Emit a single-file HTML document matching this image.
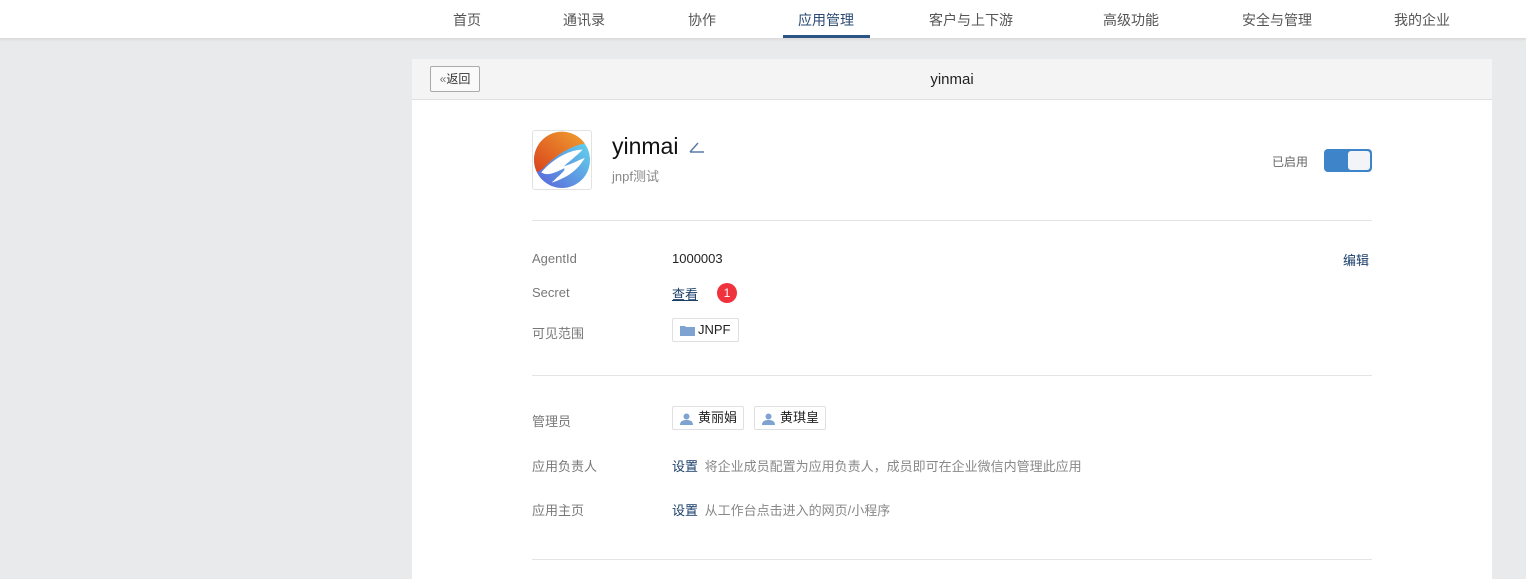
<!DOCTYPE html><html><head><meta charset="utf-8"><style>
body{margin:0;width:1526px;height:570px;background:#e9eaeb;font-family:"Liberation Sans","Noto Sans CJK SC",sans-serif;overflow:hidden;position:relative;font-size:13px}
.nav{position:absolute;left:0;top:0;width:1526px;height:38px;background:#fff;border-bottom:1px solid #dcdcdc;box-shadow:0 1px 2px rgba(0,0,0,.06)}
.nav span{position:absolute;top:10px;font-size:14px;color:#555;transform:translateX(-50%)}
.nav .act{color:#2a4a72}
.ul{position:absolute;left:783px;top:35px;width:87px;height:3px;background:#2c5587}
.card{position:absolute;left:412px;top:59px;width:1080px;height:520px;background:#fff}
.hd{height:40px;background:#f4f4f4;border-bottom:1px solid #e0e0e0;position:relative}
.back{position:absolute;left:18px;top:7px;width:50px;height:26px;border:1px solid #aaa;border-radius:2px;font-size:12px;color:#333;line-height:24px;text-align:center;box-sizing:border-box;background:#fafafa}
.t{position:absolute;left:0;right:0;top:11px;text-align:center;font-size:15px;color:#222}
.a{position:absolute}
.lbl{color:#787878;font-size:13px}
.hr{position:absolute;left:120px;width:840px;height:1px;background:#e4e4e4}
.tag{position:absolute;height:24px;border:1px solid #e0e0e0;border-radius:2px;box-sizing:border-box;font-size:13px;color:#222;line-height:22px;padding-left:25px}
.lnk{color:#1a3f6a}
.gray{color:#888}
</style></head><body>
<div class="nav">
<span style="left:467px">首页</span><span style="left:584px">通讯录</span><span style="left:702px">协作</span><span style="left:826px" class="act">应用管理</span><span style="left:971px">客户与上下游</span><span style="left:1131px">高级功能</span><span style="left:1277px">安全与管理</span><span style="left:1422px">我的企业</span>
<div class="ul"></div></div>
<div class="card">
<div class="hd"><div class="back"><span style="color:#777">«</span>返回</div><div class="t" style="top:12px">yinmai</div></div>
<div class="a" style="left:120px;top:71px;width:60px;height:60px;border:1px solid #e2e2e2;border-radius:3px;box-sizing:border-box;overflow:hidden">
<svg width="58" height="58" viewBox="0 0 56 56"><defs><linearGradient id="o" x1="0" y1="1" x2="1" y2="0"><stop offset="0" stop-color="#d9421c"/><stop offset="1" stop-color="#f0a030"/></linearGradient><linearGradient id="b" x1="0" y1="1" x2="1" y2="0"><stop offset="0" stop-color="#5a5fd8"/><stop offset="1" stop-color="#62e0ee"/></linearGradient></defs>
<circle cx="28" cy="28" r="27" fill="url(#b)"/><path d="M1 28A27 27 0 0 1 50 12C40 14 25 20 10 36L4 40A27 27 0 0 1 1 28Z" fill="url(#o)"/><path d="M8 40C20 26 36 18 48 18C40 26 34 30 30 34C38 32 44 28 50 26C42 40 30 46 18 50C26 42 32 38 30 36C22 40 14 44 8 40Z" fill="#fff"/></svg></div>
<div class="a" style="left:200px;top:74px;font-size:23px;color:#111">yinmai</div>
<svg class="a" style="left:277px;top:82px" width="16" height="12"><path d="M1 11L9 2M1 11H15" stroke="#5a7ca8" stroke-width="1.5" fill="none"/></svg>
<div class="a gray" style="left:200px;top:107px;font-size:13px">jnpf测试</div>
<div class="a gray" style="left:860px;top:94px;font-size:12px;color:#666">已启用</div>
<div class="a" style="left:912px;top:90px;width:48px;height:23px;background:#3d84c8;border-radius:4px"><div style="position:absolute;right:2px;top:2px;width:22px;height:19px;background:#f2f4f8;border-radius:3px"></div></div>
<div class="hr" style="top:161px"></div>
<div class="a lbl" style="left:120px;top:192px">AgentId</div><div class="a" style="left:260px;top:192px;color:#222">1000003</div>
<div class="a lnk" style="left:931px;top:191px">编辑</div>
<div class="a lbl" style="left:120px;top:226px">Secret</div><div class="a lnk" style="left:260px;top:225px;text-decoration:underline">查看</div>
<div class="a" style="left:305px;top:224px;width:20px;height:20px;border-radius:50%;background:#f0323c;color:#fff;font-size:12px;text-align:center;line-height:20px">1</div>
<div class="a lbl" style="left:120px;top:264px">可见范围</div>
<div class="tag" style="left:260px;top:259px;width:67px"><svg style="position:absolute;left:7px;top:6px" width="15" height="11"><path d="M0 1h5l1 1h9v9H0z" fill="#7ea3d0"/></svg>JNPF</div>
<div class="hr" style="top:316px"></div>
<div class="a lbl" style="left:120px;top:352px">管理员</div>
<div class="tag" style="left:260px;top:347px;width:72px"><svg style="position:absolute;left:7px;top:6px" width="13" height="12"><circle cx="6.5" cy="3.5" r="3" fill="#7ea3d0"/><path d="M0 12C0 8 3 7 6.5 7S13 8 13 12Z" fill="#7ea3d0"/></svg>黄丽娟</div>
<div class="tag" style="left:342px;top:347px;width:72px"><svg style="position:absolute;left:7px;top:6px" width="13" height="12"><circle cx="6.5" cy="3.5" r="3" fill="#7ea3d0"/><path d="M0 12C0 8 3 7 6.5 7S13 8 13 12Z" fill="#7ea3d0"/></svg>黄琪皇</div>
<div class="a lbl" style="left:120px;top:397px">应用负责人</div>
<div class="a" style="left:260px;top:397px"><span class="lnk">设置</span> <span class="gray" style="font-size:13px;margin-left:3px">将企业成员配置为应用负责人，成员即可在企业微信内管理此应用</span></div>
<div class="a lbl" style="left:120px;top:441px">应用主页</div>
<div class="a" style="left:260px;top:441px"><span class="lnk">设置</span> <span class="gray" style="font-size:13px;margin-left:3px">从工作台点击进入的网页/小程序</span></div>
<div class="hr" style="top:500px"></div>
</div>
</body></html>
